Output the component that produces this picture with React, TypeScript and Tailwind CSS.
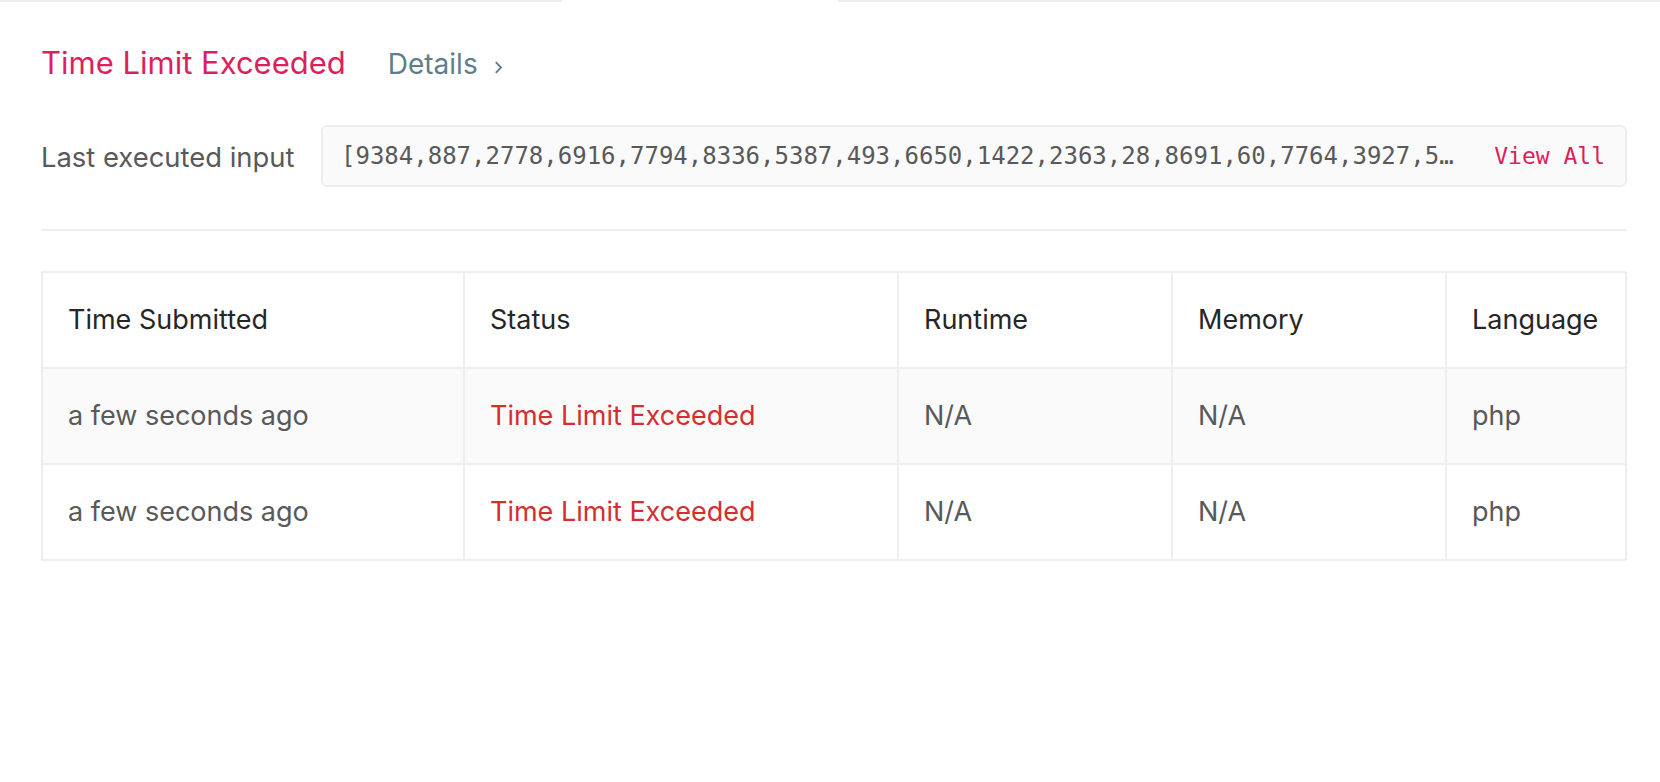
import React from 'react';

const INPUT =
  '[9384,887,2778,6916,7794,8336,5387,493,6650,1422,2363,28,8691,60,7764,3927,5410,8206,6544,3307,9121,4718,2246,905,6630,1874,7052,3318,4496,8813]';

const COLUMNS = ['Time Submitted', 'Status', 'Runtime', 'Memory', 'Language'];

const ROWS = [
  { time: 'a few seconds ago', status: 'Time Limit Exceeded', runtime: 'N/A', memory: 'N/A', lang: 'php' },
  { time: 'a few seconds ago', status: 'Time Limit Exceeded', runtime: 'N/A', memory: 'N/A', lang: 'php' },
];

function Cell({ children, className = '' }: { children: React.ReactNode; className?: string }) {
  return (
    <div className={`flex h-[96px] items-center border-r-2 border-b-2 border-[#eeeeee] pl-[25px] ${className}`}>
      {children}
    </div>
  );
}

export default function App() {
  return (
    <div className="min-h-[782px] bg-white font-['Inter',sans-serif]">
      {/* tab underline, active tab is open */}
      <div className="flex h-[2px]">
        <div className="w-[562px] bg-[#eeeeee]" />
        <div className="w-[276px]" />
        <div className="flex-1 bg-[#eeeeee]" />
      </div>

      <div className="pl-[41px] pr-[33px]">
        <div className="mt-[41px] flex items-baseline">
          <span className="text-[31px] leading-[40px] text-[#dd1f5d]">Time Limit Exceeded</span>
          <button className="ml-[42px] flex items-baseline text-[28px] leading-[40px] text-[#607d8b]">
            Details
            <svg className="mb-[2px] ml-[16px] h-[13px] w-[9px]" viewBox="0 0 9 13" fill="none">
              <path d="M1.8 1.2 L7 6.5 L1.8 11.8" stroke="#607d8b" strokeWidth="1.9" />
            </svg>
          </button>
        </div>

        <div className="mt-[41px] flex items-center">
          <div className="w-[280px] shrink-0 pt-[4px] text-[27.4px] text-[#595959]">Last executed input</div>
          <div className="flex h-[62px] min-w-0 flex-1 items-center rounded-[6px] border-2 border-[#eeeeee] bg-[#fafafa] pl-[18px] pr-[20px] font-['DejaVu_Sans_Mono',monospace]">
            <span className="min-w-0 flex-1 truncate text-[24px] text-[#595959]">{INPUT}</span>
            <span className="ml-[34px] shrink-0 text-[23px] text-[#dd1f5d]">View All</span>
          </div>
        </div>

        <div className="mt-[42px] h-[2px] bg-[#eeeeee]" />

        <div className="mt-[40px] grid grid-cols-[422px_434px_274px_274px_1fr] border-t-2 border-l-2 border-[#eeeeee] text-[27px]">
          {COLUMNS.map((c) => (
            <Cell key={c} className="text-[#262626]">
              {c}
            </Cell>
          ))}
          {ROWS.map((r, i) => {
            const bg = i % 2 === 0 ? 'bg-[#fafafa]' : 'bg-white';
            return (
              <React.Fragment key={i}>
                <Cell className={`${bg} text-[#595959]`}>{r.time}</Cell>
                <Cell className={`${bg} text-[#d32f2f]`}>{r.status}</Cell>
                <Cell className={`${bg} text-[#595959]`}>{r.runtime}</Cell>
                <Cell className={`${bg} text-[#595959]`}>{r.memory}</Cell>
                <Cell className={`${bg} text-[#595959]`}>{r.lang}</Cell>
              </React.Fragment>
            );
          })}
        </div>
      </div>
    </div>
  );
}
